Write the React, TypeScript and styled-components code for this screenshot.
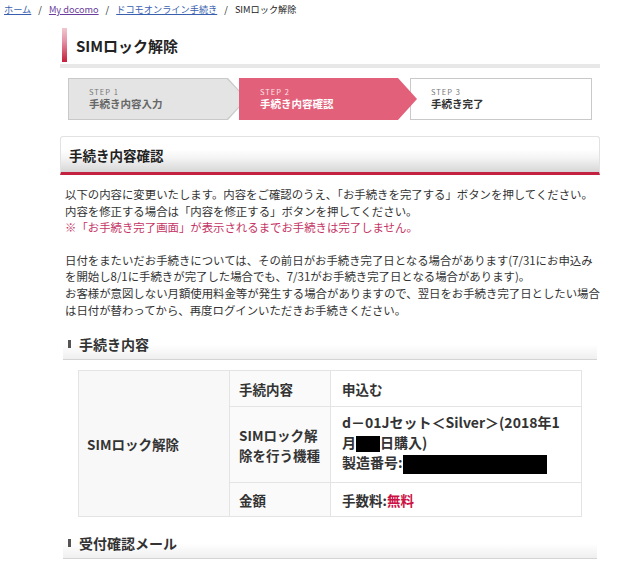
import styled, { createGlobalStyle } from 'styled-components'

const GlobalStyle = createGlobalStyle`
    body {
        margin: 0;
        background: #fff;
        color: #333;
        font-family: "Noto Sans CJK JP", "Noto Sans", sans-serif;
    }
`

const Breadcrumb = styled.nav`
    height: 18px;
    padding: 0 4px;
    display: flex;
    align-items: center;
    gap: 7px;
    font-size: 9.2px;
    color: #222;
`

const Crumb = styled.a<{ $visited?: boolean }>`
    color: ${(p) => (p.$visited ? '#6a3c9c' : '#3a5fae')};
    text-decoration: underline;
`

const Page = styled.main`
    width: 540px;
    margin-left: 60px;
`

const TitleBar = styled.div`
    margin-top: 10px;
    padding-bottom: 2px;
    border-bottom: 4px solid #e8e8e8;
`

const Title = styled.h1`
    margin: 0 0 0 2px;
    height: 34px;
    display: flex;
    align-items: center;
    gap: 9px;
    font-size: 15px;
    font-weight: bold;
    color: #222;

    &::before {
        content: '';
        width: 5px;
        height: 34px;
        background: linear-gradient(#f0c8d0, #e590a4 40%, #c41e3a);
    }
`

const Steps = styled.div`
    margin: 10px 8px 0;
    display: flex;
    height: 42px;
`

type Kind = 'done' | 'current' | 'next'

const stepWidth = { done: 179, current: 178, next: 182 }
const stepShift = { done: 0, current: -8, next: -7 }
const stepLayer = { done: 1, current: 3, next: 2 }
const stepEdge = { done: '#c9c9c9', current: '#e2607a', next: '#c9c9c9' }
const stepFill = { done: '#e4e4e4', current: '#e2607a', next: '#fff' }

const Step = styled.div<{ $kind: Kind }>`
    position: relative;
    width: ${(p) => stepWidth[p.$kind]}px;
    height: 42px;
    flex: none;
    display: flex;
    flex-direction: column;
    justify-content: center;
    padding-left: 21px;
    box-sizing: border-box;
    z-index: ${(p) => stepLayer[p.$kind]};
    margin-left: ${(p) => stepShift[p.$kind]}px;
    background: ${(p) => stepEdge[p.$kind]};
    clip-path: ${(p) =>
        p.$kind === 'next' ? 'none' : 'polygon(0 0, calc(100% - 19px) 0, 100% 50%, calc(100% - 19px) 100%, 0 100%)'};

    &::before {
        content: '';
        position: absolute;
        inset: 1px;
        z-index: -1;
        background: ${(p) => stepFill[p.$kind]};
        clip-path: ${(p) =>
            p.$kind === 'next' ? 'none' : 'polygon(0 0, calc(100% - 19px) 0, 100% 50%, calc(100% - 19px) 100%, 0 100%)'};
    }
`

const StepNo = styled.span<{ $light?: boolean }>`
    font-size: 7.5px;
    letter-spacing: 1px;
    line-height: 10px;
    color: ${(p) => (p.$light ? '#fbe3e8' : '#777')};
`

const StepLabel = styled.span<{ $color: string }>`
    font-size: 10.5px;
    font-weight: bold;
    line-height: 14px;
    color: ${(p) => p.$color};
`

const SectionHeader = styled.h2`
    margin: 16px 0 0;
    height: 35px;
    display: flex;
    align-items: center;
    padding-left: 8px;
    border: 1px solid #e2e2e2;
    border-bottom: 3px solid #c2223f;
    border-radius: 3px 3px 0 0;
    background: linear-gradient(#fff 35%, #f4f4f4 60%, #d6d6d6);
    font-size: 13.5px;
    font-weight: bold;
    color: #222;
`

const Text = styled.p`
    margin: 11px 0 0 5px;
    font-size: 11.4px;
    line-height: 16.6px;
    white-space: nowrap;
    color: #333;

    & + & {
        margin-top: 16px;
    }
`

const Notice = styled.span`
    color: #c43465;
`

const SubHeader = styled.h3`
    margin: 17px 3px 0 3px;
    height: 25px;
    box-sizing: border-box;
    padding: 0 0 6px 5px;
    display: flex;
    align-items: center;
    gap: 8px;
    border-bottom: 1px solid #d4d4d4;
    background: linear-gradient(#fff, #fff 40%, #efefef);
    font-size: 14px;
    font-weight: bold;
    color: #333;

    &::before {
        content: '';
        width: 3px;
        height: 8px;
        background: #555;
    }
`

const Table = styled.table`
    margin: 10px 0 0 18px;
    width: 504px;
    table-layout: fixed;
    border-collapse: collapse;
    font-size: 13.5px;
    font-weight: bold;
    color: #333;

    td,
    th {
        border: 1px solid #e4e4e4;
        text-align: left;
        vertical-align: middle;
    }
`

const Head = styled.th<{ $wide?: boolean }>`
    padding: 0 ${(p) => (p.$wide ? 8 : 9)}px;
    background: ${(p) => (p.$wide ? '#f8f8f8' : '#fafafa')};
    line-height: 20px;
`

const Cell = styled.td<{ $big?: boolean }>`
    padding: ${(p) => (p.$big ? '5px 4px 8px 11px' : '0 10px 0 11px')};
    font-size: ${(p) => (p.$big ? 14 : 13.5)}px;
    line-height: 20px;
    white-space: nowrap;
    background: #fff;
`

const Row = styled.tr<{ $h: number }>`
    height: ${(p) => p.$h}px;
`

const Masked = styled.span<{ $w: number; $h: number }>`
    display: inline-block;
    width: ${(p) => p.$w}px;
    height: ${(p) => p.$h}px;
    background: #000;
    vertical-align: middle;
`

const Free = styled.span`
    color: #cc1144;
`

const App = () => {
    return (
        <>
            <GlobalStyle />

            <Breadcrumb>
                <Crumb href="#">ホーム</Crumb>
                <span>/</span>
                <Crumb $visited href="#">My docomo</Crumb>
                <span>/</span>
                <Crumb href="#">ドコモオンライン手続き</Crumb>
                <span>/</span>
                <span>SIMロック解除</span>
            </Breadcrumb>

            <Page>
                <TitleBar>
                    <Title>SIMロック解除</Title>
                </TitleBar>

                <Steps>
                    <Step $kind="done">
                        <StepNo>STEP 1</StepNo>
                        <StepLabel $color="#666">手続き内容入力</StepLabel>
                    </Step>
                    <Step $kind="current">
                        <StepNo $light>STEP 2</StepNo>
                        <StepLabel $color="#fff">手続き内容確認</StepLabel>
                    </Step>
                    <Step $kind="next">
                        <StepNo>STEP 3</StepNo>
                        <StepLabel $color="#333">手続き完了</StepLabel>
                    </Step>
                </Steps>

                <SectionHeader>手続き内容確認</SectionHeader>

                <Text>
                    以下の内容に変更いたします。内容をご確認のうえ、「お手続きを完了する」ボタンを押してください。
                    <br />
                    内容を修正する場合は「内容を修正する」ボタンを押してください。
                    <br />
                    <Notice>※「お手続き完了画面」が表示されるまでお手続きは完了しません。</Notice>
                </Text>

                <Text>
                    日付をまたいだお手続きについては、その前日がお手続き完了日となる場合があります(7/31にお申込み
                    <br />
                    を開始し8/1に手続きが完了した場合でも、7/31がお手続き完了日となる場合があります)。
                    <br />
                    お客様が意図しない月額使用料金等が発生する場合がありますので、翌日をお手続き完了日としたい場合
                    <br />
                    は日付が替わってから、再度ログインいただきお手続きください。
                </Text>

                <SubHeader>手続き内容</SubHeader>

                <Table>
                    <colgroup>
                        <col style={{ width: 151 }} />
                        <col style={{ width: 101 }} />
                        <col />
                    </colgroup>
                    <tbody>
                        <Row $h={36}>
                            <Head $wide rowSpan={3}>SIMロック解除</Head>
                            <Head>手続内容</Head>
                            <Cell>申込む</Cell>
                        </Row>
                        <Row $h={75}>
                            <Head>
                                SIMロック解
                                <br />
                                除を行う機種
                            </Head>
                            <Cell $big>
                                d－01Jセット＜Silver＞(2018年1
                                <br />
                                月<Masked $w={24} $h={16} />日購入)
                                <br />
                                製造番号:<Masked $w={144} $h={19} />
                            </Cell>
                        </Row>
                        <Row $h={34}>
                            <Head>金額</Head>
                            <Cell>
                                手数料:<Free>無料</Free>
                            </Cell>
                        </Row>
                    </tbody>
                </Table>

                <SubHeader>受付確認メール</SubHeader>
            </Page>
        </>
    )
}

export default App
